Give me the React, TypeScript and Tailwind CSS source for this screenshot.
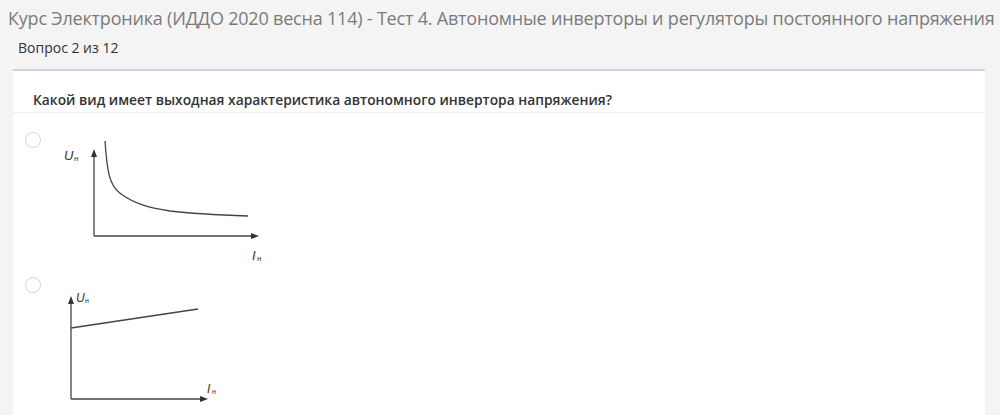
import React from 'react';

const font = { fontFamily: '"Open Sans", "Liberation Sans", sans-serif' };

// curve of option 1, coordinates local to its svg (page minus 55,128)
const Graph1 = () => (
  <svg width="220" height="135" viewBox="0 0 220 135" className="block">
    <g stroke="#444" strokeWidth="1.3" fill="none">
      <line x1="39" y1="26" x2="39" y2="106" />
      <line x1="39" y1="106" x2="198" y2="106" />
      <path d="M50 11 C52 40 54 56 66 64 C80 74 95 78 115 81 C140 84 165 85 193 86" />
    </g>
    <polygon points="39,19 36,27 42,27" fill="#333" />
    <polygon points="204,106 196,103 196,109" fill="#333" />
    <text x="9" y="30" fontSize="13" fontStyle="italic" fill="#333" fontFamily="Liberation Sans, sans-serif">U</text>
    <text x="19" y="31" fontSize="8" fill="#333" fontFamily="Liberation Sans, sans-serif">н</text>
    <text x="197" y="130" fontSize="13" fontStyle="italic" fill="#333" fontFamily="Liberation Sans, sans-serif">I</text>
    <text x="202" y="131" fontSize="8" fill="#333" fontFamily="Liberation Sans, sans-serif">н</text>
  </svg>
);

// option 2, local = page minus 55,280
const Graph2 = () => (
  <svg width="180" height="125" viewBox="0 0 180 125" className="block">
    <g stroke="#444" strokeWidth="1.3" fill="none">
      <line x1="16" y1="21" x2="16" y2="118" />
      <line x1="16" y1="118" x2="148" y2="118" />
      <line x1="16" y1="47" x2="143" y2="28" />
    </g>
    <polygon points="16,15 13,23 19,23" fill="#333" />
    <polygon points="153,118 145,115 145,121" fill="#333" />
    <text x="21" y="21" fontSize="12" fontStyle="italic" fill="#333" fontFamily="Liberation Sans, sans-serif">U</text>
    <text x="30" y="22" fontSize="7" fill="#333" fontFamily="Liberation Sans, sans-serif">н</text>
    <text x="152" y="112" fontSize="12" fontStyle="italic" fill="#333" fontFamily="Liberation Sans, sans-serif">I</text>
    <text x="157" y="113" fontSize="7" fill="#333" fontFamily="Liberation Sans, sans-serif">н</text>
  </svg>
);

const Radio = () => (
  <span className="block w-4 h-4 rounded-full border border-[#d6d6d6] bg-white shrink-0" />
);

export default function App() {
  return (
    <div className="w-[1000px] h-[415px] overflow-hidden bg-[#f4f4f4]" style={font}>
      <h1 className="pl-2 pt-[5px] text-[18px] leading-[26px] text-[#7b7b7b] whitespace-nowrap tracking-[-0.2px]">
        Курс Электроника (ИДДО 2020 весна 114) - Тест 4. Автономные инверторы и регуляторы постоянного напряжения
      </h1>
      <div className="pl-[18px] pt-[8px] text-[14px] leading-[18px] text-[#333]">Вопрос 2 из 12</div>

      <div className="ml-[13px] mt-[12px] w-[972px] bg-white border-t-2 border-[#cfd3de] pb-10">
        <div className="px-5 pt-[20px] pb-[3px] border-b border-[#f0f0f0] text-[13.8px] leading-[18px] font-semibold text-[#333]">
          Какой вид имеет выходная характеристика автономного инвертора напряжения?
        </div>

        <div className="flex pt-[18px] pl-[12px]">
          <div className="pt-[1px]"><Radio /></div>
          <div className="ml-[14px] -mt-[1px]"><Graph1 /></div>
        </div>

        <div className="flex pt-[11px] pl-[12px]">
          <div className="pt-[1px]"><Radio /></div>
          <div className="ml-[14px] mt-[5px]"><Graph2 /></div>
        </div>
      </div>
    </div>
  );
}
